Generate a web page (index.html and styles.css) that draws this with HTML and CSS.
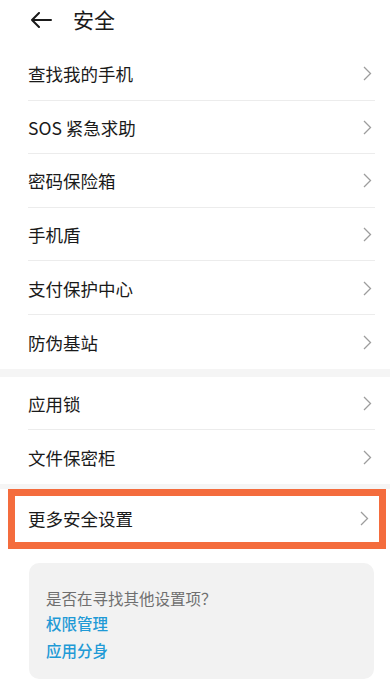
FILE: index.html
```html
<!DOCTYPE html>
<html lang="zh-CN">
<head>
<meta charset="utf-8">
<link rel="stylesheet" href="styles.css">
</head>
<body>
<div class="page">
  <header class="header">
    <svg class="back" width="22" height="16" viewBox="0 0 22 16"><path d="M21 8H2M9 1L2 8l7 7" fill="none" stroke="#1a1a1a" stroke-width="2" stroke-linecap="round" stroke-linejoin="round"/></svg>
    <h1 class="title">安全</h1>
  </header>
  <ul class="group">
    <li class="row"><span>查找我的手机</span><svg class="chev" width="9" height="15" viewBox="0 0 9 15"><path d="M1 1l6.5 6.5L1 14" fill="none" stroke="#9d9d9d" stroke-width="1.3"/></svg></li>
    <li class="row"><span>SOS 紧急求助</span><svg class="chev" width="9" height="15" viewBox="0 0 9 15"><path d="M1 1l6.5 6.5L1 14" fill="none" stroke="#9d9d9d" stroke-width="1.3"/></svg></li>
    <li class="row"><span>密码保险箱</span><svg class="chev" width="9" height="15" viewBox="0 0 9 15"><path d="M1 1l6.5 6.5L1 14" fill="none" stroke="#9d9d9d" stroke-width="1.3"/></svg></li>
    <li class="row"><span>手机盾</span><svg class="chev" width="9" height="15" viewBox="0 0 9 15"><path d="M1 1l6.5 6.5L1 14" fill="none" stroke="#9d9d9d" stroke-width="1.3"/></svg></li>
    <li class="row"><span>支付保护中心</span><svg class="chev" width="9" height="15" viewBox="0 0 9 15"><path d="M1 1l6.5 6.5L1 14" fill="none" stroke="#9d9d9d" stroke-width="1.3"/></svg></li>
    <li class="row"><span>防伪基站</span><svg class="chev" width="9" height="15" viewBox="0 0 9 15"><path d="M1 1l6.5 6.5L1 14" fill="none" stroke="#9d9d9d" stroke-width="1.3"/></svg></li>
  </ul>
  <div class="gap"></div>
  <ul class="group">
    <li class="row"><span>应用锁</span><svg class="chev" width="9" height="15" viewBox="0 0 9 15"><path d="M1 1l6.5 6.5L1 14" fill="none" stroke="#9d9d9d" stroke-width="1.3"/></svg></li>
    <li class="row"><span>文件保密柜</span><svg class="chev" width="9" height="15" viewBox="0 0 9 15"><path d="M1 1l6.5 6.5L1 14" fill="none" stroke="#9d9d9d" stroke-width="1.3"/></svg></li>
  </ul>
  <div class="gap gap-small"></div>
  <div class="highlight"><span>更多安全设置</span><svg class="chev" width="9" height="15" viewBox="0 0 9 15"><path d="M1 1l6.5 6.5L1 14" fill="none" stroke="#9d9d9d" stroke-width="1.3"/></svg></div>
  <div class="card">
    <p class="card-q">是否在寻找其他设置项？</p>
    <a class="card-link link-1">权限管理</a>
    <a class="card-link link-2">应用分身</a>
  </div>
</div>
</body>
</html>
```

FILE: styles.css
```css
* { box-sizing: border-box; margin: 0; padding: 0; }
html, body { background: #ffffff; }
body {
  font-family: "Noto Sans CJK SC", "Noto Sans", Roboto, sans-serif;
  color: #1a1a1a;
  width: 390px;
  height: 688px;
  overflow: hidden;
}
.page { width: 390px; }
.header {
  height: 47px;
  display: flex;
  align-items: center;
  padding-left: 30px;
  padding-bottom: 9px;
}
.back { display: block; margin-top: 2px; }
.title {
  font-size: 21px;
  font-weight: 400;
  margin-left: 21px;
  line-height: 28px;
}
.group { list-style: none; }
.row {
  height: 53.6px;
  margin-left: 28px;
  margin-right: 15px;
  display: flex;
  align-items: center;
  justify-content: space-between;
  font-size: 17.5px;
  border-bottom: 1px solid #ececec;
  padding-right: 3px;
  padding-top: 1px;
}
.row:last-child { border-bottom: none; }
.chev { display: block; flex: none; }
.gap { height: 8px; background: #f5f5f5; }
.gap-small { height: 5px; }
.highlight {
  margin-left: 8px;
  margin-right: 4px;
  height: 60px;
  border: 7px solid #f46c3d;
  display: flex;
  align-items: center;
  justify-content: space-between;
  padding-left: 13px;
  padding-right: 10px;
  font-size: 17.5px;
}
.card {
  margin: 14px 16px 0 29px;
  background: #f2f2f2;
  border-radius: 10px;
  padding: 24px 17px 18px 17px;
  height: 116px;
  display: flex;
  flex-direction: column;
}
.card-q {
  font-size: 15.5px;
  line-height: 22px;
  color: #6f6f6f;
}
.card-link {
  font-size: 15.5px;
  line-height: 22px;
  color: #1f9ad6;
  font-weight: 500;
}
.link-1 { margin-top: 3px; }
.link-2 { margin-top: 5px; }
```
